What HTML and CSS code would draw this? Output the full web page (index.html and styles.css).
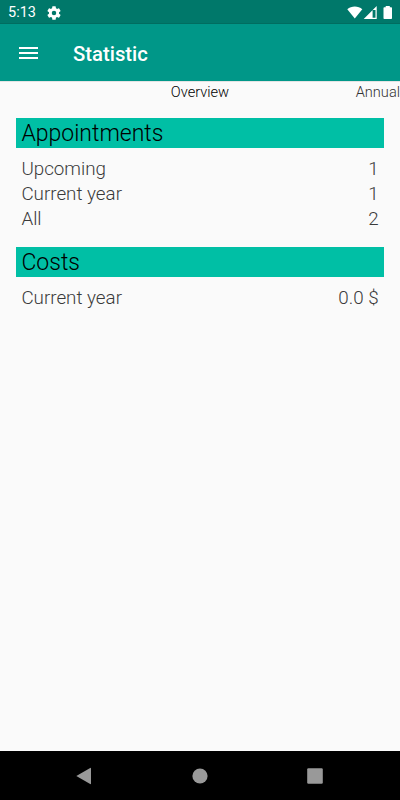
FILE: index.html
```html
<!DOCTYPE html>
<html lang="en">
<head>
    <meta charset="UTF-8">
    <meta name="viewport" content="width=device-width, initial-scale=1.0">
    <title>Statistic</title>
    <link rel="stylesheet" href="styles.css">
</head>
<body>
    <div class="status-bar">
        <span class="clock">5:13</span>
        <svg class="gear" viewBox="2 2 20 20"><path fill="#fff" d="M19.14 12.94c.04-.3.06-.61.06-.94s-.02-.64-.07-.94l2.03-1.58a.49.49 0 0 0 .12-.61l-1.92-3.32a.49.49 0 0 0-.59-.22l-2.39.96c-.5-.38-1.03-.7-1.62-.94l-.36-2.54a.48.48 0 0 0-.48-.41h-3.84a.47.47 0 0 0-.47.41l-.36 2.54c-.59.24-1.13.57-1.62.94l-2.39-.96a.48.48 0 0 0-.59.22L2.74 8.87a.48.48 0 0 0 .12.61l2.03 1.58c-.05.3-.09.63-.09.94s.02.64.07.94l-2.03 1.58a.49.49 0 0 0-.12.61l1.92 3.32c.12.22.37.29.59.22l2.39-.96c.5.38 1.03.7 1.62.94l.36 2.54c.05.24.24.41.48.41h3.84c.24 0 .44-.17.47-.41l.36-2.54c.59-.24 1.13-.56 1.62-.94l2.39.96c.22.08.47 0 .59-.22l1.92-3.32a.48.48 0 0 0-.12-.61zM12 15.2a3.2 3.2 0 1 1 0-6.4 3.2 3.2 0 0 1 0 6.4z"/></svg>
        <svg class="signals" width="48" height="14" viewBox="0 0 48 14">
            <path fill="#fff" d="M0.3 3.2C4.3-.3 11.3-.3 15.3 3.2L7.8 12.4z"/>
            <path fill="#fff" fill-rule="evenodd" d="M29.7 0v13H16.7zM28.5 4h-2.9v7.8h2.9z"/>
            <path fill="#fff" d="M38.7 0h4.1v1.3h1.4q.8 0 .8.8v10.1q0 .8-.8.8h-6.9q-.8 0-.8-.8V2.1q0-.8.8-.8h1.4z"/>
        </svg>
    </div>

    <header class="toolbar">
        <button class="menu" aria-label="Menu">
            <span></span>
            <span></span>
            <span></span>
        </button>
        <h1>Statistic</h1>
    </header>

    <nav class="tabs">
        <span></span>
        <span class="active">Overview</span>
        <span class="next">Annual</span>
    </nav>

    <main>
        <section>
            <h2>Appointments</h2>
            <dl>
                <div class="row"><dt>Upcoming</dt><dd>1</dd></div>
                <div class="row"><dt>Current year</dt><dd>1</dd></div>
                <div class="row"><dt>All</dt><dd>2</dd></div>
            </dl>
        </section>
        <section>
            <h2>Costs</h2>
            <dl>
                <div class="row"><dt>Current year</dt><dd>0.0 $</dd></div>
            </dl>
        </section>
    </main>

    <footer class="nav-bar">
        <svg width="16" height="18" viewBox="0 0 16 18"><path fill="#999" d="M.3 9 14.2.9q.8-.4.8.5v15.2q0 .9-.8.5z"/></svg>
        <svg width="16" height="16" viewBox="0 0 16 16"><circle cx="8" cy="8" r="7.6" fill="#999"/></svg>
        <svg width="16" height="16" viewBox="0 0 16 16"><rect x=".2" y=".2" width="15.6" height="15.6" rx="1.2" fill="#999"/></svg>
    </footer>
</body>
</html>
```

FILE: styles.css
```css
* {
    box-sizing: border-box;
}
body {
    display: flex;
    flex-direction: column;
    height: 800px;
    margin: 0;
    overflow: hidden;
    background: #fafafa;
    font-family: Roboto, sans-serif;
}

/* status bar */
.status-bar {
    display: flex;
    align-items: center;
    height: 24px;
    padding: 1px 5px 0 8px;
    background: #00786a;
    color: #fff;
}
.clock {
    width: 39px;
    font-size: 14.5px;
    line-height: 24px;
}
.gear {
    width: 14px;
    height: 14px;
}
.signals {
    margin-left: auto;
}

/* toolbar */
.toolbar {
    display: flex;
    align-items: center;
    height: 57px;
    padding-left: 19px;
    background: #009788;
    box-shadow: 0 0 1px rgba(0,0,0,0.5);
}
.menu {
    display: flex;
    flex-direction: column;
    gap: 3px;
    width: 19px;
    padding: 0;
    border: 0;
    background: none;
}
.menu span {
    height: 2px;
    background: #fff;
}
h1 {
    margin: 3px 0 0 35px;
    color: #fff;
    font-size: 20.3px;
    font-weight: 500;
}

/* tabs */
.tabs {
    display: grid;
    grid-template-columns: 1fr auto 1fr;
    height: 21px;
    font-size: 14.6px;
    font-weight: 300;
    line-height: 23px;
    color: #333;
}
.tabs .active {
    color: #000;
}
.tabs .next {
    text-align: right;
}

/* statistics */
main {
    flex: 1;
    padding: 16px 16.4px;
}
h2 {
    height: 30px;
    margin: 0;
    padding-left: 5px;
    background: #00bfa5;
    color: #000;
    font-size: 23px;
    font-weight: 300;
    line-height: 32px;
}
dl {
    margin: 0;
    padding: 9px 5px 15.6px;
}
.row {
    display: flex;
    justify-content: space-between;
    height: 24.8px;
    color: #3a3a3a;
    font-size: 18.8px;
    font-weight: 300;
    line-height: 25.4px;
}
dd {
    margin: 0;
}

/* navigation buttons */
.nav-bar {
    display: flex;
    align-items: center;
    justify-content: space-between;
    height: 49px;
    padding: 0 77px 0 76px;
    background: #000;
}
```
